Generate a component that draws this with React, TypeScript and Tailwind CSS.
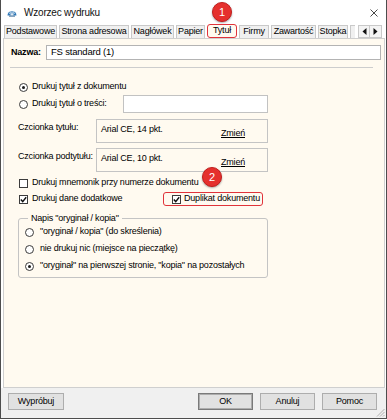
import React from 'react'

function AppIcon() {
  return (
    <svg width="10" height="9" viewBox="0 0 10 9">
      <path d="M0.5 7.5 A4.5 4.5 0 0 1 9.5 7.5 Z" fill="#2f78b7" />
      <path d="M5 7.5 L1.6 4.4 M5 7.5 L3.2 3.2 M5 7.5 L5 3 M5 7.5 L6.8 3.2 M5 7.5 L8.4 4.4" stroke="#ffffff" strokeWidth="0.7" />
      <rect x="2" y="7.4" width="6" height="1.4" fill="#6b8fb0" />
    </svg>
  )
}

function Radio({ checked }: { checked?: boolean }) {
  return (
    <span className="w-[9px] h-[9px] rounded-full border border-[#3c3c3c] bg-white flex items-center justify-center shrink-0">
      {checked && <span className="w-[3px] h-[3px] rounded-full bg-[#1a1a1a]" />}
    </span>
  )
}

function Checkbox({ checked }: { checked?: boolean }) {
  return (
    <span className="w-[9px] h-[9px] border border-[#3c3c3c] bg-white flex items-center justify-center shrink-0">
      {checked && (
        <svg width="7" height="7" viewBox="0 0 7 7">
          <path d="M0.8 3.6 L2.7 5.6 L6.2 1.2" fill="none" stroke="#111" strokeWidth="1.4" />
        </svg>
      )}
    </span>
  )
}

function Badge({ n }: { n: string }) {
  return (
    <div className="w-[20px] h-[20px] rounded-full bg-[#e5302d] border border-[#c21d1d] shadow-[0_1px_2px_rgba(0,0,0,0.35)] flex items-center justify-center text-white text-[11px] tracking-normal">
      {n}
    </div>
  )
}

const tabs = [
  { name: 'Podstawowe', w: 'w-[53px]' },
  { name: 'Strona adresowa', w: 'w-[70px]' },
  { name: 'Nagłówek', w: 'w-[43px]' },
  { name: 'Papier', w: 'w-[29px]' },
  { name: 'Tytuł', w: 'w-[30px]', active: true },
  { name: 'Firmy', w: 'w-[30px]' },
  { name: 'Zawartość', w: 'w-[45px]' },
  { name: 'Stopka', w: 'w-[30px]' },
]

export default function App() {
  return (
    <div className="w-[387px] h-[420px] bg-white font-['Liberation_Sans',Arial,sans-serif] text-[9px] text-black tracking-[-0.2px] relative">
      <div className="w-[387px] h-[419px] border border-t-0 border-[#4d4d4d] flex flex-col bg-white">
        {/* Title bar */}
        <div className="h-[25px] flex items-center pl-[6px] pr-[8px]">
          <AppIcon />
          <span className="ml-[7px] text-[10px] text-[#111]">Wzorzec wydruku</span>
          <svg className="ml-auto" width="8" height="8" viewBox="0 0 8 8">
            <path d="M0.5 0.5 L7.5 7.5 M7.5 0.5 L0.5 7.5" stroke="#333" strokeWidth="0.9" />
          </svg>
        </div>

        {/* Tabs */}
        <div className="h-[13px] flex items-stretch gap-[2px] pl-[3px] relative z-10">
          {tabs.map((t) =>
            t.active ? (
              <div
                key={t.name}
                className={`${t.w} h-[14px] -mt-[1px] rounded-[3px] border-[1.5px] border-[#e0333a] bg-[#fffaf0] flex items-center justify-center`}
              >
                {t.name}
              </div>
            ) : (
              <div
                key={t.name}
                className={`${t.w} border border-b-0 border-[#c9c9c9] bg-[#f0f0f0] flex items-center justify-center whitespace-nowrap`}
              >
                {t.name}
              </div>
            )
          )}
          <div className="w-[5px] border border-r-0 border-b-0 border-[#c9c9c9] bg-[#f0f0f0]" />
          <div className="ml-[1px] flex items-stretch">
            <div className="w-[12px] border border-[#c9c9c9] bg-[#f4f4f4] flex items-center justify-center">
              <svg width="5" height="7" viewBox="0 0 5 7">
                <path d="M4.5 0 L4.5 7 L0.5 3.5 Z" fill="#111" />
              </svg>
            </div>
            <div className="w-[12px] border border-l-0 border-[#c9c9c9] bg-[#f4f4f4] flex items-center justify-center">
              <svg width="5" height="7" viewBox="0 0 5 7">
                <path d="M0.5 0 L0.5 7 L4.5 3.5 Z" fill="#111" />
              </svg>
            </div>
          </div>
        </div>

        {/* Tab panel */}
        <div className="ml-[2px] w-[382px] h-[350px] border border-[#cfcfcf] bg-[#fffaf0] flex flex-col">
          {/* Nazwa */}
          <div className="mt-[6px] h-[15px] flex items-center pl-[7px] pr-[3px]">
            <span className="w-[35px] font-bold">Nazwa:</span>
            <div className="flex-1 h-[15px] border border-[#b3b3b3] bg-white flex items-center pl-[4px] text-[9.5px]">
              FS standard (1)
            </div>
          </div>

          <div className="mt-[7px] ml-[6px] w-[363px] border-t border-[#cdcdcd]" />

          {/* Radios */}
          <div className="mt-[11px] h-[16px] flex items-center pl-[15px] gap-[4px]">
            <Radio checked />
            <span>Drukuj tytuł z dokumentu</span>
          </div>
          <div className="h-[18px] flex items-center pl-[15px]">
            <Radio />
            <span className="ml-[4px] w-[91px]">Drukuj tytuł o treści:</span>
            <div className="w-[145px] h-[18px] border border-[#c2c2c2] bg-white" />
          </div>

          {/* Fonts */}
          <div className="mt-[6px] h-[24px] flex pl-[14px]">
            <span className="w-[78px] pt-[2px]">Czcionka tytułu:</span>
            <div className="w-[172px] h-[24px] border border-[#c4c4c4] flex pl-[4px] pt-[3px]">
              <span className="w-[120px]">Arial CE, 14 pkt.</span>
              <span className="mt-[4px] underline">Zmień</span>
            </div>
          </div>
          <div className="mt-[5px] h-[24px] flex pl-[14px]">
            <span className="w-[78px] pt-[2px]">Czcionka podtytułu:</span>
            <div className="w-[172px] h-[24px] border border-[#c4c4c4] flex pl-[4px] pt-[3px]">
              <span className="w-[120px]">Arial CE, 10 pkt.</span>
              <span className="mt-[4px] underline">Zmień</span>
            </div>
          </div>

          {/* Checkboxes */}
          <div className="mt-[3px] h-[16px] flex items-center pl-[15px] gap-[4px]">
            <Checkbox />
            <span>Drukuj mnemonik przy numerze dokumentu</span>
          </div>
          <div className="mt-[1px] h-[14px] flex items-center pl-[15px]">
            <Checkbox checked />
            <span className="ml-[4px] w-[131px]">Drukuj dane dodatkowe</span>
            <div className="w-[100px] h-[14px] rounded-[3px] border-[1.5px] border-[#e0333a] flex items-center pl-[8px] gap-[3px]">
              <Checkbox checked />
              <span>Duplikat dokumentu</span>
            </div>
          </div>

          {/* Group box */}
          <fieldset className="mt-[7px] ml-[14px] w-[250px] border border-[#c4c4c4] rounded-[3px] pl-[6px] pb-[3px]">
            <legend className="ml-[3px] px-[3px] leading-[11px]">Napis "oryginał / kopia"</legend>
            <div className="h-[16px] flex items-center gap-[6px]">
              <Radio />
              <span>"oryginał / kopia" (do skreślenia)</span>
            </div>
            <div className="mt-[1px] h-[16px] flex items-center gap-[6px]">
              <Radio />
              <span>nie drukuj nic (miejsce na pieczątkę)</span>
            </div>
            <div className="mt-[1px] h-[16px] flex items-center gap-[6px]">
              <Radio checked />
              <span>"oryginał" na pierwszej stronie, "kopia" na pozostałych</span>
            </div>
          </fieldset>
        </div>

        {/* Buttons */}
        <div className="flex-1 bg-[#f0f0f0] flex items-start pt-[5px] pl-[7px] pr-[9px] relative">
          <button className="w-[56px] h-[17px] border border-[#adadad] bg-[#e1e1e1]">Wypróbuj</button>
          <div className="ml-auto flex gap-[7px]">
            <button className="w-[55px] h-[17px] border border-[#7a7a7a] bg-[#e1e1e1] shadow-[inset_0_0_0_1px_#adadad]">OK</button>
            <button className="w-[55px] h-[17px] border border-[#adadad] bg-[#e1e1e1]">Anuluj</button>
            <button className="w-[55px] h-[17px] border border-[#adadad] bg-[#e1e1e1]">Pomoc</button>
          </div>
          <svg className="absolute right-[1px] bottom-[1px]" width="9" height="9" viewBox="0 0 9 9">
            <path d="M8.5 1 L1 8.5 M8.5 4 L4 8.5 M8.5 7 L7 8.5" stroke="#a8a8a8" strokeWidth="0.9" />
          </svg>
        </div>
      </div>

      {/* Annotation badges */}
      <div className="absolute left-[212px] top-[2px]">
        <Badge n="1" />
      </div>
      <div className="absolute left-[202px] top-[167px]">
        <Badge n="2" />
      </div>
    </div>
  )
}
